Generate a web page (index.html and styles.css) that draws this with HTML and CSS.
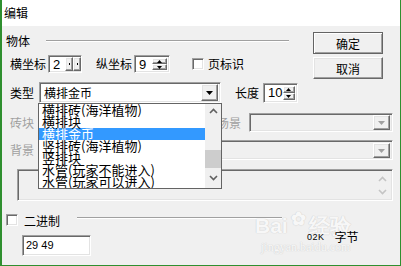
FILE: index.html
```html
<!DOCTYPE html>
<html>
<head>
<meta charset="utf-8">
<link rel="stylesheet" href="styles.css">
</head>
<body>
<div class="window">
  <div class="titlebar">编辑</div>
  <div class="content">
    <div class="top">
      <div class="left">
        <div class="group-head"><span>物体</span><div class="hline"></div></div>
        <div class="row coord-row">
          <span>横坐标</span>
          <div class="sunken spin spin-x">
            <span class="val">2</span>
            <div class="hbtns"><div class="raised hb"><i class="dot"></i></div><div class="raised hb"><i class="dot"></i></div></div>
          </div>
          <span class="lbl-y">纵坐标</span>
          <div class="sunken spin spin-y">
            <span class="val">9</span>
            <div class="vbtns">
              <div class="raised vb"><svg width="5" height="3" viewBox="0 0 5 3"><path d="M2.5 0 L5 3 L0 3Z" fill="#000"/></svg></div>
              <div class="raised vb"><svg width="5" height="3" viewBox="0 0 5 3"><path d="M0 0 L5 0 L2.5 3Z" fill="#000"/></svg></div>
            </div>
          </div>
          <span class="check chk-page"></span><span class="lbl-page">页标识</span>
        </div>
        <div class="row type-row">
          <span>类型</span>
          <div class="sunken combo combo-type">
            <span class="val">横排金币</span>
            <div class="raised drop-btn"><svg width="7" height="4" viewBox="0 0 7 4"><path d="M0 0 L7 0 L3.5 4Z" fill="#000"/></svg></div>
          </div>
          <span class="lbl-len">长度</span>
          <div class="sunken spin spin-len">
            <span class="val">10</span>
            <div class="vbtns">
              <div class="raised vb"><svg width="5" height="3" viewBox="0 0 5 3"><path d="M2.5 0 L5 3 L0 3Z" fill="#000"/></svg></div>
              <div class="raised vb"><svg width="5" height="3" viewBox="0 0 5 3"><path d="M0 0 L5 0 L2.5 3Z" fill="#000"/></svg></div>
            </div>
          </div>
        </div>
      </div>
      <div class="right">
        <div class="btn default">确定</div>
        <div class="btn">取消</div>
      </div>
    </div>

    <div class="row brick-row">
      <span class="dis">砖块</span>
      <div class="sunken dcombo combo-brick"><div class="raised drop-btn"><svg width="7" height="4" viewBox="0 0 7 4"><path d="M0 0 L7 0 L3.5 4Z" fill="#a0a0a0"/></svg></div></div>
      <span class="dis lbl-scene">场景</span>
      <div class="sunken dcombo combo-scene"><div class="raised drop-btn"><svg width="7" height="4" viewBox="0 0 7 4"><path d="M0 0 L7 0 L3.5 4Z" fill="#a0a0a0"/></svg></div></div>
    </div>

    <div class="row bg-row">
      <span class="dis">背景</span>
      <div class="sunken dcombo combo-bg"><div class="raised drop-btn"><svg width="7" height="4" viewBox="0 0 7 4"><path d="M0 0 L7 0 L3.5 4Z" fill="#a0a0a0"/></svg></div></div>
    </div>

    <div class="sunken textarea">
      <div class="tscroll">
        <svg width="9" height="6" viewBox="0 0 9 6"><path d="M1 5 L4.5 1.5 L8 5" fill="none" stroke="#c4c4c4" stroke-width="1.6"/></svg>
        <svg width="9" height="6" viewBox="0 0 9 6"><path d="M1 1 L4.5 4.5 L8 1" fill="none" stroke="#c4c4c4" stroke-width="1.6"/></svg>
      </div>
    </div>

    <div class="row bin-row">
      <span class="check"></span>
      <span class="lbl-bin">二进制</span>
      <div class="hline bin-line"></div>
    </div>

    <div class="row data-row">
      <div class="sunken field">29 49</div>
      <div class="status"><span class="kb">02K</span><span class="bytes">字节</span></div>
    </div>
  </div>

  <div class="droplist">
    <div class="items">
      <div class="item">横排砖(海洋植物)</div>
      <div class="item">横排块</div>
      <div class="item sel">横排金币</div>
      <div class="item">竖排砖(海洋植物)</div>
      <div class="item">竖排块</div>
      <div class="item">水管(玩家不能进入)</div>
      <div class="item">水管(玩家可以进入)</div>
    </div>
    <div class="lscroll">
      <svg class="chev-up" width="9" height="6" viewBox="0 0 9 6"><path d="M1 5 L4.5 1.5 L8 5" fill="none" stroke="#606060" stroke-width="1.6"/></svg>
      <div class="thumb"></div>
      <svg class="chev-down" width="9" height="6" viewBox="0 0 9 6"><path d="M1 1 L4.5 4.5 L8 1" fill="none" stroke="#606060" stroke-width="1.6"/></svg>
    </div>
  </div>

  <div class="watermark">
    <div class="wm-big">Bai<span class="wm-paw">&#10047;</span>经验</div>
    <div class="wm-small">jingyan.baidu.com</div>
  </div>
</div>
</body>
</html>
```
FILE: styles.css
```css
* { box-sizing: border-box; margin: 0; padding: 0; }
body {
  margin: 0;
  font-family: "Noto Sans CJK SC", "Noto Sans", sans-serif;
  font-size: 12px;
  color: #000;
  background: #f0f0f0;
}
.window {
  position: relative;
  width: 401px;
  height: 266px;
  border-left: 2px solid #2f8f2f;
  border-right: 1px solid #2f8f2f;
  border-bottom: 1px solid #2f8f2f;
  background: #f0f0f0;
  overflow: hidden;
}
.titlebar {
  height: 26px;
  background: #fff;
  line-height: 26px;
  padding-left: 2px;
  font-size: 12px;
}
.content { display: flex; flex-direction: column; }
.top { display: flex; }
.left { width: 300px; display: flex; flex-direction: column; }
.right {
  margin-left: 11px;
  padding-top: 6px;
  display: flex;
  flex-direction: column;
  gap: 3px;
}
.row { display: flex; align-items: center; line-height: 14px; }

.sunken {
  background: #fff;
  border: 1px solid;
  border-color: #a0a0a0 #fff #fff #a0a0a0;
  box-shadow: inset 1px 1px 0 #696969, inset -1px -1px 0 #e3e3e3;
}
.raised {
  background: #f0f0f0;
  border: 1px solid;
  border-color: #fff #696969 #696969 #fff;
  box-shadow: inset -1px -1px 0 #a0a0a0, inset 1px 1px 0 #e3e3e3;
}
.hline {
  height: 2px;
  border-top: 1px solid #a0a0a0;
  border-bottom: 1px solid #fff;
}

.group-head {
  display: flex;
  align-items: center;
  height: 14px;
  margin-top: 8px;
  padding-left: 4px;
  line-height: 14px;
}
.group-head .hline { flex: 1; margin-left: 16px; margin-right: 13px; }

.coord-row { height: 18px; margin-top: 7px; padding-left: 8px; }
.spin { display: flex; align-items: stretch; height: 18px; padding: 2px; }
.spin .val {
  flex: 1;
  font-family: "Liberation Sans", sans-serif;
  font-size: 13px;
  line-height: 14px;
  padding-left: 2px;
}
.spin-x { width: 34px; margin-left: 2px; padding-right: 0; }
.hbtns { display: flex; width: 16px; margin-top: -1px; margin-bottom: -1px; }
.hb { width: 8px; display: flex; align-items: center; justify-content: center; }
.dot { width: 1px; height: 2px; background: #000; display: block; }
.lbl-y { margin-left: 14px; }
.spin-y { width: 36px; margin-left: 2px; }
.vbtns { display: flex; flex-direction: column; width: 15px; }
.vb { flex: 1; display: flex; align-items: center; justify-content: center; }
.vb svg { display: block; }

.check {
  width: 12px;
  height: 12px;
  background: #fff;
  border: 1px solid;
  border-color: #a0a0a0 #fff #fff #a0a0a0;
  box-shadow: inset 1px 1px 0 #696969, inset -1px -1px 0 #e3e3e3;
}
.chk-page { margin-left: 22px; }
.lbl-page { margin-left: 4px; }

.type-row { height: 21px; margin-top: 9px; padding-left: 8px; }
.combo {
  display: flex;
  align-items: center;
  height: 21px;
  padding: 2px;
}
.combo-type { width: 182px; margin-left: 5px; }
.combo .val { flex: 1; padding-left: 2px; font-size: 12px; line-height: 14px; }
.drop-btn {
  width: 17px;
  height: 17px;
  display: flex;
  align-items: center;
  justify-content: center;
  align-self: center;
}
.drop-btn svg { display: block; margin-top: 1px; }
.lbl-len { margin-left: 14px; }
.spin-len { width: 35px; height: 20px; margin-left: 4px; }

.btn {
  width: 70px;
  height: 22px;
  display: flex;
  align-items: center;
  justify-content: center;
  background: #f0f0f0;
  border: 1px solid;
  border-color: #fff #696969 #696969 #fff;
  box-shadow: inset -1px -1px 0 #a0a0a0, inset 1px 1px 0 #e3e3e3;
  font-size: 12px;
}
.btn.default {
  border-color: #646464;
  box-shadow: inset 1px 1px 0 #fff, inset -1px -1px 0 #a0a0a0;
}

.dis { color: #a0a0a0; }
.dcombo {
  display: flex;
  align-items: center;
  justify-content: flex-end;
  background: #f0f0f0;
  padding: 2px;
}
.brick-row { height: 19px; margin-top: 10px; padding-left: 8px; }
.combo-brick { width: 170px; height: 19px; margin-left: 5px; }
.lbl-scene { margin-left: 8px; }
.combo-scene { width: 144px; height: 19px; margin-left: 8px; }
.bg-row { height: 20px; margin-top: 8px; padding-left: 8px; }
.combo-bg { width: 354px; height: 20px; margin-left: 5px; }
.brick-row .drop-btn, .bg-row .drop-btn { height: 15px; }

.textarea {
  width: 376px;
  height: 32px;
  margin-top: 9px;
  margin-left: 15px;
  background: #f0f0f0;
  display: flex;
  justify-content: flex-end;
  padding: 2px 2px 2px 2px;
}
.tscroll {
  width: 16px;
  display: flex;
  flex-direction: column;
  justify-content: space-between;
  align-items: center;
  padding: 4px 0 3px;
}
.tscroll svg { display: block; }

.bin-row { height: 13px; margin-top: 13px; padding-left: 4px; align-items: flex-start; }
.lbl-bin { margin-left: 6px; line-height: 13px; }
.bin-line { width: 205px; margin-left: 17px; margin-top: 3px; }

.data-row { margin-top: 4px; align-items: flex-start; }
.field {
  width: 69px;
  height: 21px;
  margin-top: 4px;
  margin-left: 20px;
  padding: 3px 0 0 3px;
  font-family: "Liberation Sans", sans-serif;
  font-size: 11px;
  line-height: 13px;
}
.status { margin-left: 216px; display: flex; align-items: center; line-height: 12px; position: relative; z-index: 2; }
.kb { font-family: "Liberation Sans", sans-serif; font-size: 9px; letter-spacing: 0.5px; }
.bytes { margin-left: 10px; font-size: 12px; }

.droplist {
  position: absolute;
  left: 36px;
  top: 103px;
  width: 184px;
  height: 86px;
  border: 1px solid #646464;
  background: #fff;
  display: flex;
  overflow: hidden;
}
.items { flex: 1; }
.item {
  height: 12px;
  line-height: 12px;
  font-size: 13px;
  padding-left: 3px;
  white-space: nowrap;
  overflow: visible;
}
.item.sel { background: #3399ff; color: #fff; }
.lscroll {
  width: 16px;
  background: #f0f0f0;
  position: relative;
  display: flex;
  flex-direction: column;
  align-items: center;
}
.chev-up { display: block; margin-top: 4px; }
.thumb { width: 16px; height: 18px; background: #cdcdcd; margin-top: 36px; }
.chev-down { display: block; margin-top: 7px; }

.watermark {
  position: absolute;
  left: 253px;
  top: 212px;
  color: rgba(255, 255, 255, 0.85);
  text-shadow: 0 0 1px #d0d0d0, 0 0 1px #d0d0d0;
  pointer-events: none;
  z-index: 1;
}
.wm-big { font-family: "Liberation Sans", sans-serif; font-size: 21px; font-weight: bold; line-height: 28px; }
.wm-paw { font-size: 18px; margin: 0 3px; position: relative; top: -8px; }
.wm-small { font-family: "Liberation Serif", serif; font-size: 12px; line-height: 12px; margin-left: 6px; }
```
